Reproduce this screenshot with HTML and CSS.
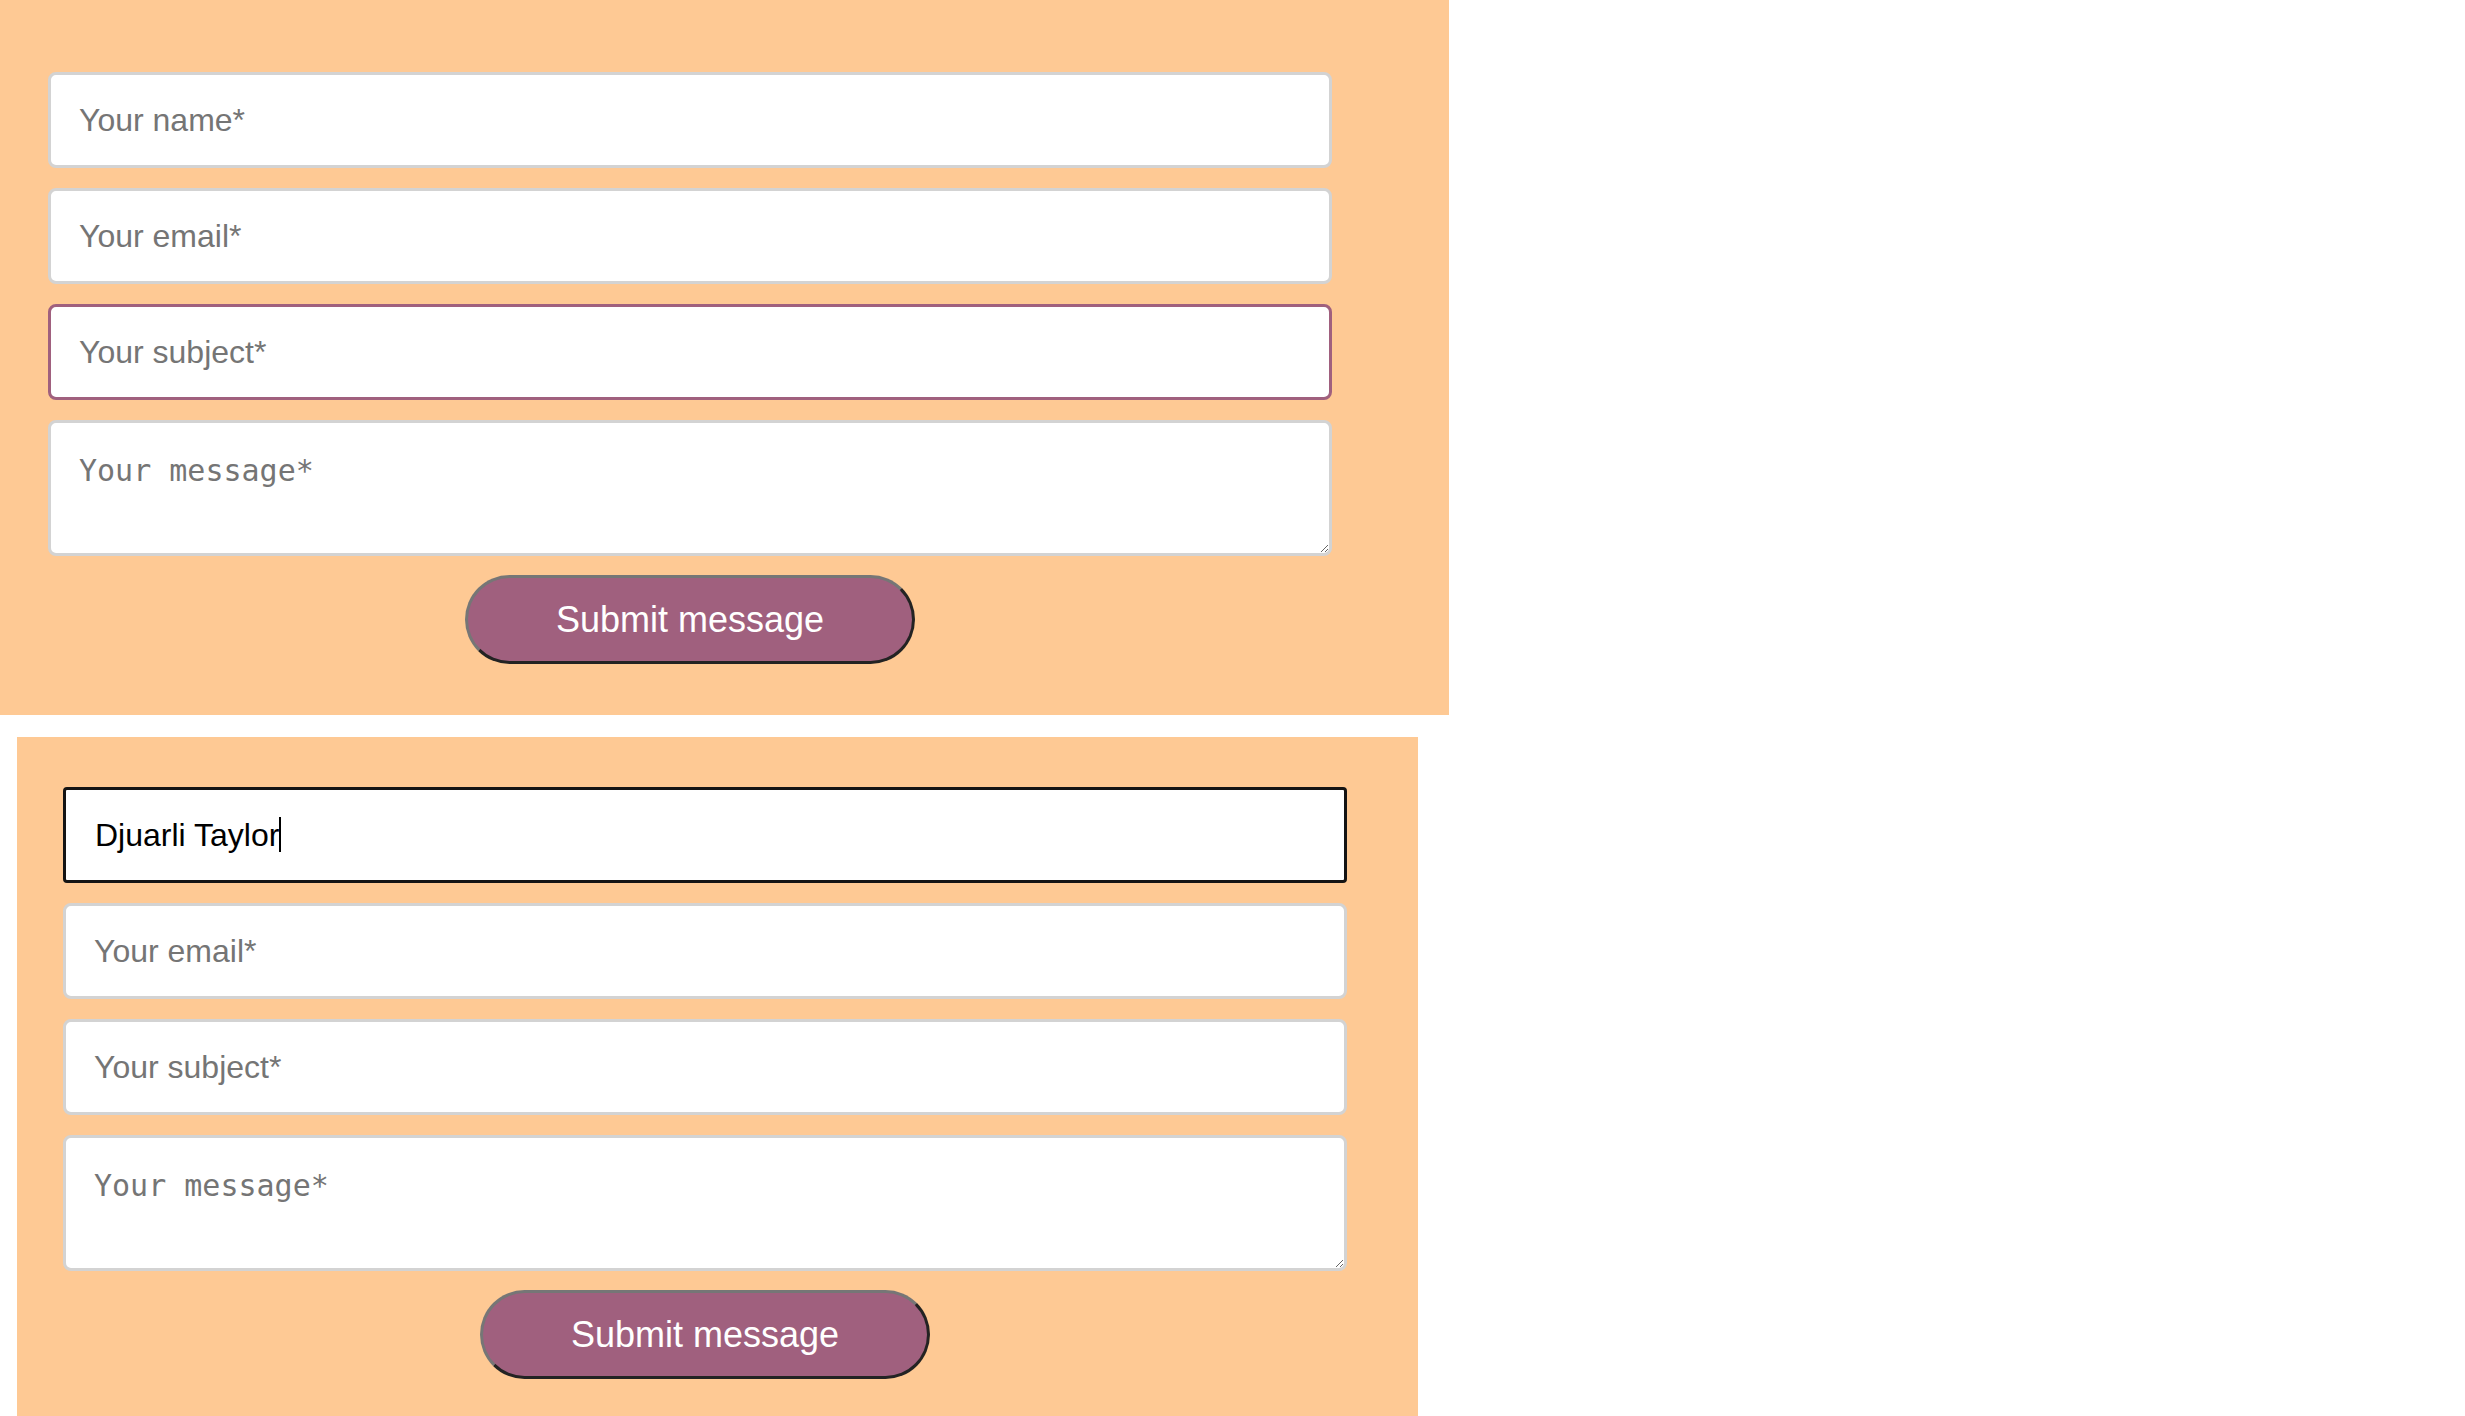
FILE: index.html
```html
<!DOCTYPE html>
<html lang="en">
<head>
<meta charset="utf-8">
<title>Contact form</title>
<link rel="stylesheet" href="styles.css">
</head>
<body>
  <div class="panel panel-first">
    <form class="contact-form">
      <input class="field" type="text" placeholder="Your name*">
      <input class="field" type="email" placeholder="Your email*">
      <input class="field field-active" type="text" placeholder="Your subject*">
      <textarea class="field field-message" placeholder="Your message*"></textarea>
      <button class="submit" type="button">Submit message</button>
    </form>
  </div>
  <div class="panel panel-second">
    <form class="contact-form">
      <div class="field-wrap">
        <input class="field field-focused" type="text" value="Djuarli Taylor" placeholder="Your name*">
        <span class="caret"></span>
      </div>
      <input class="field" type="email" placeholder="Your email*">
      <input class="field" type="text" placeholder="Your subject*">
      <textarea class="field field-message" placeholder="Your message*"></textarea>
      <button class="submit" type="button">Submit message</button>
    </form>
  </div>
</body>
</html>
```

FILE: styles.css
```css
html, body {
  margin: 0;
  padding: 0;
  background: #ffffff;
  overflow: hidden;
}

.panel {
  box-sizing: border-box;
  background: #fec994;
}

.panel-first {
  width: 1449px;
  height: 715px;
  padding: 72px 0 0 48px;
}

.panel-second {
  width: 1401px;
  height: 679px;
  margin: 22px 0 0 17px;
  padding: 50px 0 0 46px;
}

.contact-form {
  width: 1284px;
  display: flex;
  flex-direction: column;
  gap: 20px;
  margin: 0;
}

.field-wrap {
  position: relative;
  display: flex;
  flex-direction: column;
}

.field {
  display: block;
  box-sizing: border-box;
  width: 100%;
  height: 96px;
  margin: 0;
  padding: 0 28px;
  border: 3px solid #d3d3d3;
  border-radius: 8px;
  background: #ffffff;
  font-family: "Liberation Sans", Arial, sans-serif;
  font-size: 32px;
  color: #000000;
  outline: none;
}

.field::placeholder {
  color: #757575;
  opacity: 1;
}

.field-active {
  border-color: #a0607e;
}

.field-focused {
  border: 3px solid #141414;
  border-radius: 4px;
  padding-left: 29px;
}

.caret {
  position: absolute;
  left: 216px;
  top: 30px;
  width: 2px;
  height: 35px;
  background: #000000;
}

.field-message {
  height: 136px;
  padding: 30px 28px;
  font-family: "DejaVu Sans Mono", "Liberation Mono", monospace;
  font-size: 30px;
  resize: both;
}

.submit {
  align-self: center;
  box-sizing: border-box;
  width: 450px;
  height: 89px;
  margin-top: -1px;
  border: 3px solid;
  border-color: #767676 #232323 #232323 #767676;
  border-radius: 45px;
  background: #a0607e;
  color: #ffffff;
  font-family: "Liberation Sans", Arial, sans-serif;
  font-size: 36px;
  cursor: pointer;
}
```
